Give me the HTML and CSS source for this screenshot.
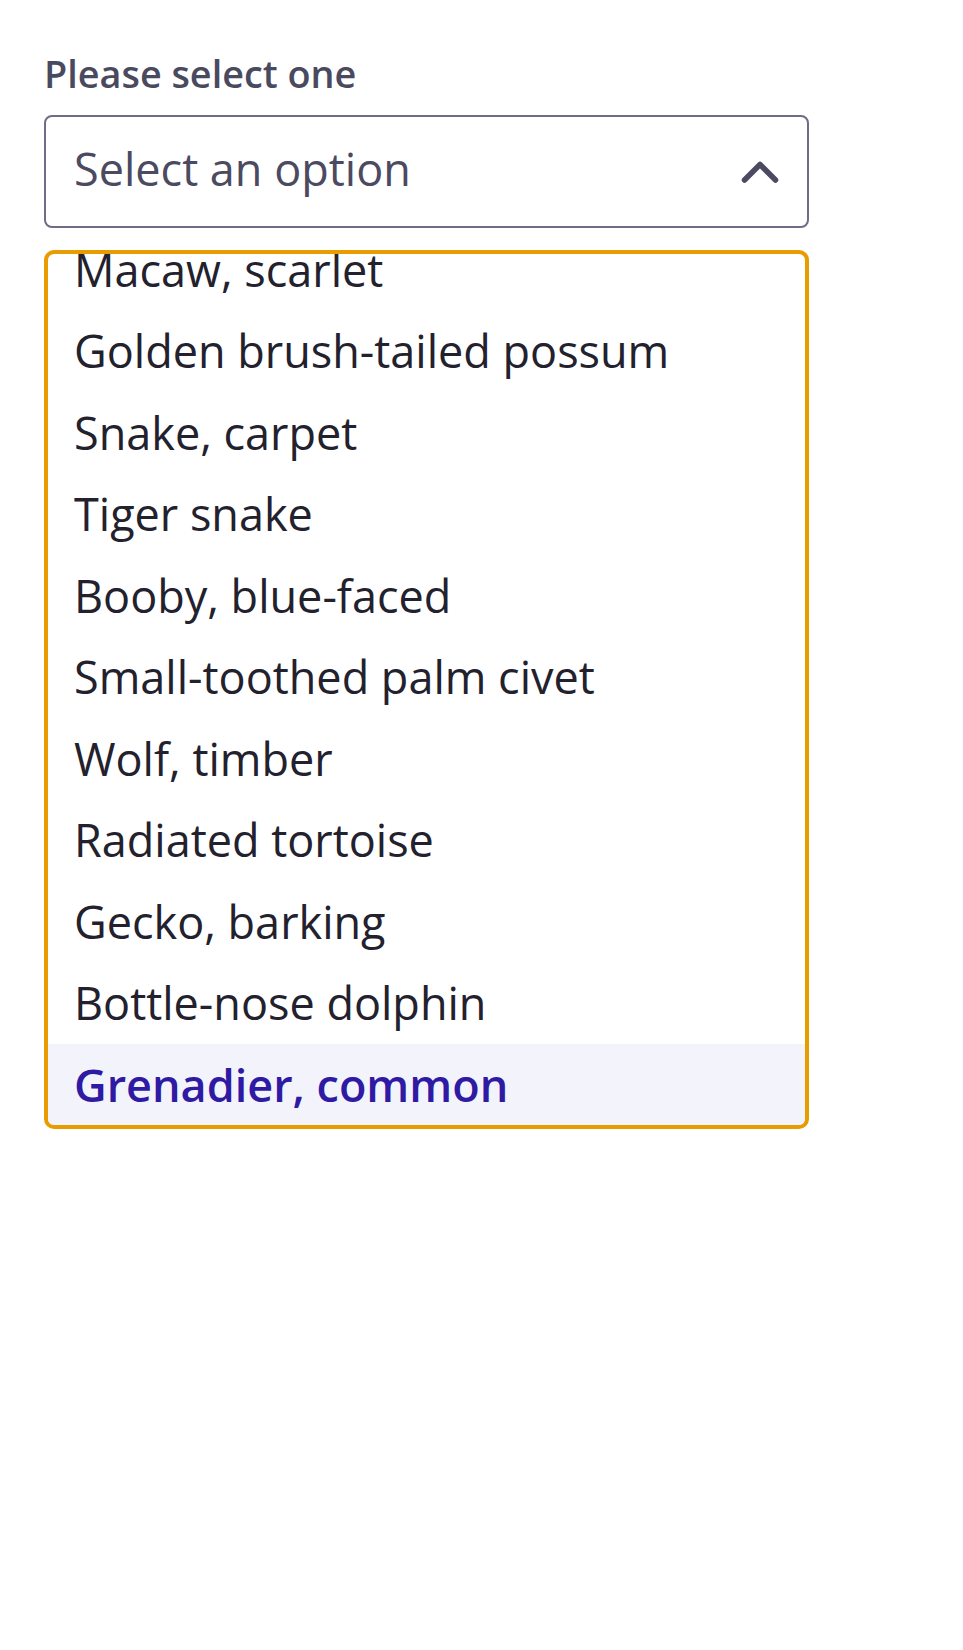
FILE: index.html
```html
<!DOCTYPE html>
<html lang="en">
<head>
<meta charset="utf-8">
<title>Select</title>
<link rel="stylesheet" href="styles.css">
</head>
<body>
<main class="field">
  <label class="field-label" for="combo">Please select one</label>
  <div class="combo" id="combo" role="combobox" aria-expanded="true">
    <span class="combo-value">Select an option</span>
    <svg class="combo-chevron" width="40" height="24" viewBox="0 0 40 24" aria-hidden="true">
      <path d="M4.5 20 L20 4.5 L35.5 20" fill="none" stroke="currentColor" stroke-width="5.5" stroke-linecap="round" stroke-linejoin="round"/>
    </svg>
  </div>
  <ul class="listbox" role="listbox">
    <li class="option">Macaw, scarlet</li>
    <li class="option">Golden brush-tailed possum</li>
    <li class="option">Snake, carpet</li>
    <li class="option">Tiger snake</li>
    <li class="option">Booby, blue-faced</li>
    <li class="option">Small-toothed palm civet</li>
    <li class="option">Wolf, timber</li>
    <li class="option">Radiated tortoise</li>
    <li class="option">Gecko, barking</li>
    <li class="option">Bottle-nose dolphin</li>
    <li class="option option-active">Grenadier, common</li>
  </ul>
</main>
</body>
</html>
```

FILE: styles.css
```css
html, body {
  margin: 0;
  padding: 0;
  background: #ffffff;
}

body {
  font-family: "Open Sans", "Noto Sans", sans-serif;
}

.field {
  display: flex;
  flex-direction: column;
  width: 765px;
  padding: 49px 0 0 44px;
}

.field-label {
  font-size: 37.8px;
  font-weight: 600;
  line-height: 49px;
  color: #4a4a5f;
  margin-bottom: 17px;
}

.combo {
  box-sizing: border-box;
  height: 113px;
  border: 2px solid #6e6d87;
  border-radius: 8px;
  display: flex;
  align-items: center;
  justify-content: space-between;
  padding: 0 27px 0 28px;
  color: #4b4a60;
}

.combo-value {
  font-size: 45px;
  line-height: 60px;
  padding-bottom: 6px;
}

.combo-chevron {
  color: #4b4a60;
}

.listbox {
  box-sizing: border-box;
  list-style: none;
  margin: 22px 0 0 0;
  padding: 0;
  height: 879px;
  border: 4px solid #e89c00;
  border-radius: 10px;
  overflow: hidden;
  display: flex;
  flex-direction: column;
  justify-content: flex-end;
}

.option {
  flex: none;
  font-size: 45px;
  line-height: 81.5px;
  color: #22212d;
  padding: 0 26px;
  white-space: nowrap;
}

.option-active {
  background: #f3f3fc;
  color: #2e1aa3;
  font-weight: 600;
}
```
